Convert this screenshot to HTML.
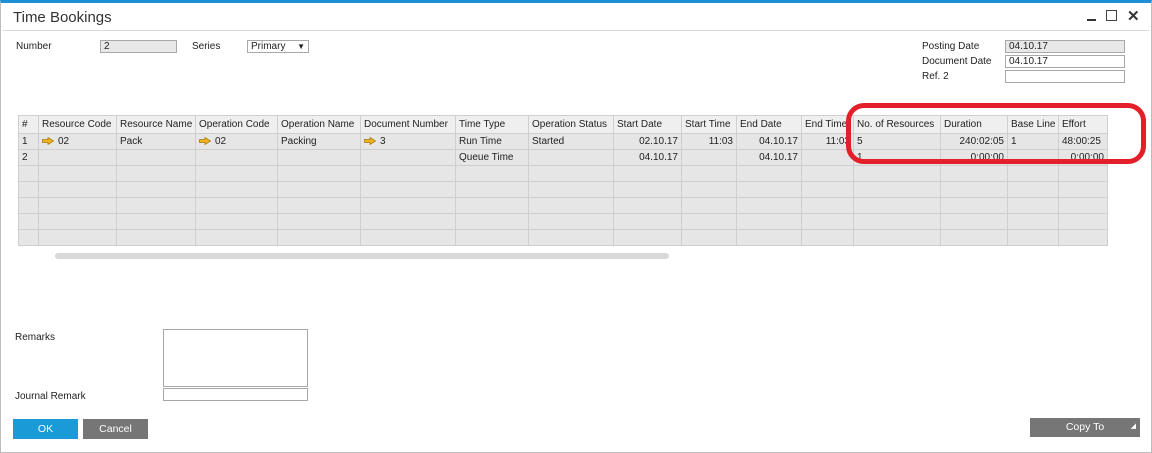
<!DOCTYPE html>
<html><head><style>
*{margin:0;padding:0;box-sizing:border-box}
body{width:1152px;height:453px;background:#fff;font-family:"Liberation Sans",sans-serif;font-size:10px;color:#222;position:relative;overflow:hidden}
.a{position:absolute}
.win{left:0;top:0;width:1152px;height:453px;border:1px solid #bdbdbd;border-top:3px solid #1e8fd6}
.title{left:13px;top:9px;font-size:15px;color:#333}
.sep{left:3px;top:30px;width:1146px;height:1px;background:#d8d8d8}
.in{border:1px solid #a8a8a8;height:13px;padding-left:3px;line-height:11px;font-size:10px}
.g{background:#e8e8e8}
.btn{color:#fff;font-size:10.5px;text-align:center;line-height:20px;height:20px}
table{border-collapse:collapse;position:absolute;left:18px;top:115px;background:#e6e6e6;table-layout:fixed;width:1089px}
td{border:1px solid #cfcfcf;height:16px;padding:0 3px;white-space:nowrap;font-size:10px;overflow:hidden}
tr.h td{height:18px;background:#efefef}
.r{text-align:right}
.arr{display:inline-block;width:12px;height:8px;vertical-align:-1px;margin-right:4px}
</style></head><body>
<div class="a win"></div>
<div class="a title">Time Bookings</div>
<div class="a" style="left:1087px;top:19px;width:9px;height:2px;background:#333"></div>
<div class="a" style="left:1106px;top:10px;width:11px;height:11px;border:1.5px solid #444"></div>
<div class="a" style="left:1127px;top:7px;font-size:15px;font-weight:bold;color:#333">✕</div>
<div class="a sep"></div>

<div class="a" style="left:16px;top:41px">Number</div>
<div class="a in g" style="left:100px;top:40px;width:77px">2</div>
<div class="a" style="left:192px;top:41px">Series</div>
<div class="a in" style="left:247px;top:40px;width:62px">Primary<span style="position:absolute;right:3px;top:0;font-size:8px">▼</span></div>

<div class="a" style="left:922px;top:41px">Posting Date</div>
<div class="a in g" style="left:1005px;top:40px;width:120px">04.10.17</div>
<div class="a" style="left:922px;top:56px">Document Date</div>
<div class="a in" style="left:1005px;top:55px;width:120px">04.10.17</div>
<div class="a" style="left:922px;top:71px">Ref. 2</div>
<div class="a in" style="left:1005px;top:70px;width:120px"></div>

<svg width="0" height="0" style="position:absolute"><defs><symbol id="ar" viewBox="0 0 12 8"><path d="M0.5 2.5H6V0.5L11.5 4L6 7.5V5.5H0.5Z" fill="#f0b324" stroke="#a87a10" stroke-width=".8"/></symbol></defs></svg>
<table>
<colgroup><col style="width:20px"><col style="width:78px"><col style="width:79px"><col style="width:82px"><col style="width:83px"><col style="width:95px"><col style="width:73px"><col style="width:85px"><col style="width:68px"><col style="width:55px"><col style="width:65px"><col style="width:52px"><col style="width:87px"><col style="width:67px"><col style="width:51px"><col style="width:49px"></colgroup>
<tr class="h"><td>#</td><td>Resource Code</td><td>Resource Name</td><td>Operation Code</td><td>Operation Name</td><td>Document Number</td><td>Time Type</td><td>Operation Status</td><td>Start Date</td><td>Start Time</td><td>End Date</td><td>End Time</td><td>No. of Resources</td><td>Duration</td><td>Base Line</td><td>Effort</td></tr>
<tr><td>1</td><td><svg class="arr"><use href="#ar"/></svg>02</td><td>Pack</td><td><svg class="arr"><use href="#ar"/></svg>02</td><td>Packing</td><td><svg class="arr"><use href="#ar"/></svg>3</td><td>Run Time</td><td>Started</td><td class="r">02.10.17</td><td class="r">11:03</td><td class="r">04.10.17</td><td class="r">11:03</td><td>5</td><td class="r">240:02:05</td><td>1</td><td>48:00:25</td></tr>
<tr><td>2</td><td></td><td></td><td></td><td></td><td></td><td>Queue Time</td><td></td><td class="r">04.10.17</td><td></td><td class="r">04.10.17</td><td></td><td>1</td><td class="r">0:00:00</td><td></td><td class="r">0:00:00</td></tr>
<tr><td></td><td></td><td></td><td></td><td></td><td></td><td></td><td></td><td></td><td></td><td></td><td></td><td></td><td></td><td></td><td></td></tr>
<tr><td></td><td></td><td></td><td></td><td></td><td></td><td></td><td></td><td></td><td></td><td></td><td></td><td></td><td></td><td></td><td></td></tr>
<tr><td></td><td></td><td></td><td></td><td></td><td></td><td></td><td></td><td></td><td></td><td></td><td></td><td></td><td></td><td></td><td></td></tr>
<tr><td></td><td></td><td></td><td></td><td></td><td></td><td></td><td></td><td></td><td></td><td></td><td></td><td></td><td></td><td></td><td></td></tr>
<tr><td></td><td></td><td></td><td></td><td></td><td></td><td></td><td></td><td></td><td></td><td></td><td></td><td></td><td></td><td></td><td></td></tr>
</table>
<div class="a" style="left:846px;top:103px;width:300px;height:61px;border:5px solid #e3202a;border-radius:18px;background:transparent"></div>
<div class="a" style="left:55px;top:253px;width:614px;height:6px;background:#d9d9d9;border-radius:3px"></div>

<div class="a" style="left:15px;top:332px">Remarks</div>
<div class="a in" style="left:163px;top:329px;width:145px;height:58px"></div>
<div class="a" style="left:15px;top:391px">Journal Remark</div>
<div class="a in" style="left:163px;top:388px;width:145px"></div>

<div class="a btn" style="left:13px;top:419px;width:65px;background:#1a9ad6">OK</div>
<div class="a btn" style="left:83px;top:419px;width:65px;background:#767676">Cancel</div>
<div class="a btn" style="left:1030px;top:418px;width:110px;height:19px;line-height:19px;background:#767676">Copy To<span style="position:absolute;right:4px;bottom:1px;font-size:7px">◢</span></div>
</body></html>
